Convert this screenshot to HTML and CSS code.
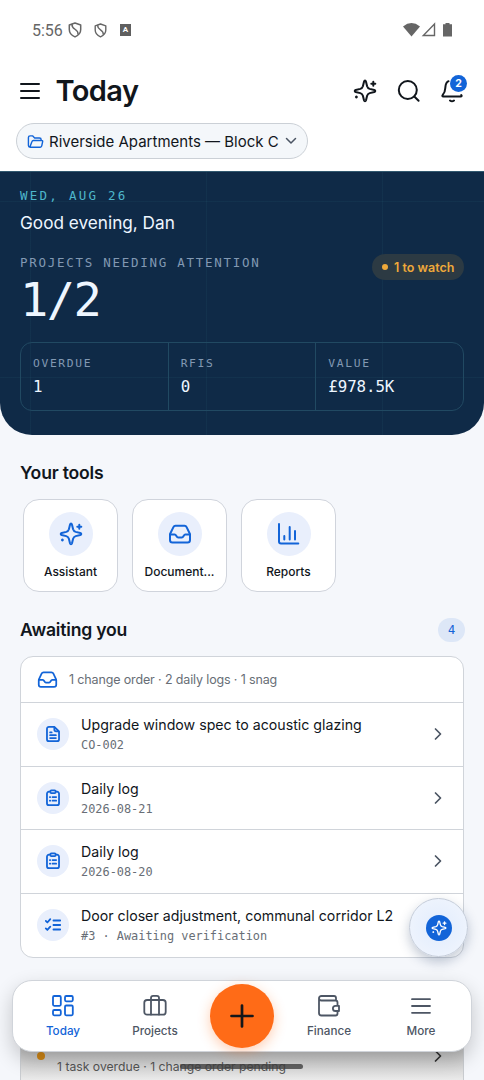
FILE: index.html
```html
<!DOCTYPE html>
<html lang="en">
<head>
<meta charset="utf-8">
<title>Today</title>
<link rel="stylesheet" href="styles.css">
</head>
<body>
<svg class="defs" aria-hidden="true">
  <symbol id="sparkle" viewBox="0 0 24 24"><path d="M12 1.6C12.6 1.6 12.8 2 13 2.7L14.1 7.3Q14.7 9.3 16.7 9.9L21.3 11C22.6 11.4 22.6 12.6 21.3 13L16.7 14.1Q14.7 14.7 14.1 16.7L13 21.3C12.6 22.6 11.4 22.6 11 21.3L9.9 16.7Q9.3 14.7 7.3 14.1L2.7 13C1.4 12.6 1.4 11.4 2.7 11L7.3 9.9Q9.3 9.3 9.9 7.3L11 2.7C11.2 2 11.4 1.6 12 1.6Z"/><path d="M20.3 2.7v4M18.3 4.700h4M3.400 17.600v1M2.900 18.100h1"/></symbol>
  <symbol id="inbox" viewBox="0 0 24 24"><path d="M2 12.500h4.600c1.900 0 1.700 3 3.600 3h3.600c1.900 0 1.700-3 3.600-3H22"/><path d="M5.400 5.100 2.300 11.500Q2 12.200 2 13v5a2.500 2.500 0 0 0 2.500 2.500h15A2.500 2.500 0 0 0 22 18v-5q0-.8-.3-1.500L18.600 5.100A2.300 2.300 0 0 0 16.500 3.800h-9A2.300 2.300 0 0 0 5.400 5.100Z"/></symbol>
  <symbol id="chev" viewBox="0 0 12 16"><path d="m3.500 3 5 5-5 5"/></symbol>
  <symbol id="clip" viewBox="0 0 20 20"><path d="M7 3H5.500A2.200 2.200 0 0 0 3.300 5.200v10.600A2.200 2.200 0 0 0 5.500 18h9a2.200 2.200 0 0 0 2.200-2.200V5.200A2.200 2.200 0 0 0 14.500 3H13"/><rect x="7" y="1.600" width="6" height="3" rx="1.200"/><path d="M6.500 9h.4M9.500 9h4M6.500 13h.4M9.500 13h4"/></symbol>
  <symbol id="shield" viewBox="0 0 14 16"><path d="M7 1 1.300 3v4.500C1.300 11 4 13.600 7 14.900c3-1.300 5.700-3.900 5.700-7.400V3Z"/><path d="M4 2.500c-.5 5 6.500 4.500 6 9.500"/></symbol>
</svg>
<div class="screen">
  <div class="status">
    <span class="clock">5:56</span>
    <svg class="gray" width="14" height="16"><use href="#shield"/></svg>
    <svg class="gray second" width="13" height="15"><use href="#shield"/></svg>
    <span class="abox">A</span>
    <svg class="signals" width="50" height="16" viewBox="0 0 50 16"><path class="solid" d="M0 4.500Q8.500-2.300 17 4.500L8.500 14.500Z"/><path class="wire" d="M31.500 2v11.500H20.300Z"/><path class="solid" d="M42.500 1h4v1.300h2.500v12.200h-9V2.300h2.500Z"/></svg>
  </div>
  <header class="top">
    <svg class="ink menu" width="22" height="18" viewBox="0 0 22 18"><path d="M2 2h18M2 9h18M2 16h18"/></svg>
    <h1>Today</h1>
    <svg class="ink" width="24" height="24"><use href="#sparkle"/></svg>
    <svg class="ink" width="24" height="24" viewBox="0 0 24 24"><circle cx="10.800" cy="11" r="9"/><path d="m17.300 17.500 4.300 4.300"/></svg>
    <div class="bell">
      <svg class="ink" width="24" height="24" viewBox="0 0 24 24"><path d="M8.500 2.200C5.300 3.800 5.500 7.200 5.300 9c-.2 4.200-1.500 5.700-2.600 7-.7.900-.3 1.600.6 1.600h17.400c.9 0 1.300-.7.600-1.600M10 21.500q2 1.600 4 0"/></svg>
      <span>2</span>
    </div>
  </header>
  <div class="picker">
    <div class="pill">
      <svg class="blue" width="17" height="17" viewBox="0 0 24 24"><path d="m4 20 3-8q.5-1.500 2-1.500h11.500q2 0 1.600 1.800l-1.300 5.900q-.4 1.800-2 1.800H4.500Q2 20 2 17.500v-11Q2 4 4.500 4h3.300l3 3h6.700Q20 7 20 9.500v1"/></svg>
      <span>Riverside Apartments — Block C</span>
      <svg class="slate" width="12" height="8" viewBox="0 0 12 8"><path d="m1.500 1.500 4.500 4.500 4.500-4.500"/></svg>
    </div>
  </div>
  <section class="hero">
    <div class="date mono">WED, AUG 26</div>
    <div class="greet">Good evening, Dan</div>
    <div class="attention">
      <div class="mono caption">PROJECTS NEEDING ATTENTION</div>
      <div class="watch"><i></i>1 to watch</div>
    </div>
    <div class="big mono">1/2</div>
    <div class="stats mono">
      <div><small>OVERDUE</small><b>1</b></div>
      <div><small>RFIS</small><b>0</b></div>
      <div><small>VALUE</small><b>£978.5K</b></div>
    </div>
  </section>
  <h2 class="tools-title">Your tools</h2>
  <div class="tools">
    <div class="tool"><span class="disc"><svg class="blue" width="24" height="24"><use href="#sparkle"/></svg></span><p>Assistant</p></div>
    <div class="tool"><span class="disc"><svg class="blue" width="24" height="24"><use href="#inbox"/></svg></span><p>Document...</p></div>
    <div class="tool"><span class="disc"><svg class="blue" width="24" height="24" viewBox="0 0 24 24"><path d="M2 2v17.500Q2 21.500 4 21.500H21.300M7.300 14v3.500M12.700 5v12.500M18 9v8.500"/></svg></span><p>Reports</p></div>
  </div>
  <div class="awaiting"><h2>Awaiting you</h2><span class="count mono">4</span></div>
  <div class="list">
    <div class="summary"><svg class="blue" width="21" height="21"><use href="#inbox"/></svg><span>1 change order · 2 daily logs · 1 snag</span></div>
    <div class="row"><span class="disc"><svg class="blue" width="18" height="18" viewBox="0 0 20 20"><path d="M11.500 2h-6A2.200 2.200 0 0 0 3.300 4.200v11.600A2.200 2.200 0 0 0 5.500 18h9a2.200 2.200 0 0 0 2.200-2.200V7ZM11.500 2v3Q11.500 7 13.500 7h3M6.800 8.300h1.700M6.800 11.300h6.400M6.800 14.500h6.400"/></svg></span><div><p>Upgrade window spec to acoustic glazing</p><p class="sub mono">CO-002</p></div><svg class="slate" width="12" height="16"><use href="#chev"/></svg></div>
    <div class="row"><span class="disc"><svg class="blue" width="18" height="18"><use href="#clip"/></svg></span><div><p>Daily log</p><p class="sub mono">2026-08-21</p></div><svg class="slate" width="12" height="16"><use href="#chev"/></svg></div>
    <div class="row"><span class="disc"><svg class="blue" width="18" height="18"><use href="#clip"/></svg></span><div><p>Daily log</p><p class="sub mono">2026-08-20</p></div><svg class="slate" width="12" height="16"><use href="#chev"/></svg></div>
    <div class="row"><span class="disc"><svg class="blue" width="18" height="18" viewBox="0 0 20 20"><path d="m2 5.500 1.700 1.700L7 3.500M2 13.800l1.700 1.700L7 11.800M10.500 5H18M10.500 10H18M10.500 15H18"/></svg></span><div><p>Door closer adjustment, communal corridor L2</p><p class="sub mono">#3 · Awaiting verification</p></div></div>
  </div>
  <div class="behind">
    <i></i><span class="desc">1 task overdue · 1 change order pending</span><svg class="dark" width="12" height="16"><use href="#chev"/></svg>
  </div>
  <div class="handle"></div>
  <div class="fab"><span><svg width="16" height="16"><use href="#sparkle"/></svg></span></div>
  <nav>
    <div class="tab on"><svg width="24" height="24" viewBox="0 0 24 24"><rect x="2" y="2" width="7.800" height="9.800" rx="1.200"/><rect x="14" y="2" width="7.800" height="5.300" rx="1.200"/><rect x="2" y="16" width="7.800" height="5.300" rx="1.200"/><rect x="14" y="11.500" width="7.800" height="9.800" rx="1.200"/></svg>Today</div>
    <div class="tab"><svg width="24" height="24" viewBox="0 0 24 24"><rect x="1.300" y="6" width="21.400" height="14.700" rx="2.800"/><path d="M8 20.500V4Q8 1.800 10.200 1.800h3.600Q16 1.800 16 4v16.500"/></svg>Projects</div>
    <div class="plus"><svg width="26" height="26" viewBox="0 0 26 26"><path d="M13 2.500v21M2.500 13h21"/></svg></div>
    <div class="tab"><svg width="24" height="24" viewBox="0 0 24 24"><path d="M19 6.500V4Q19 2 17 2H4.500Q2 2 2 4.300V19q0 2.500 2.500 2.500h14q2 0 2-2v-2.300M2 4.300Q2 6.500 4.500 6.500h14q2 0 2 2v3.300M18.500 11.800H22v5.200h-3.500a2.600 2.600 0 0 1 0-5.200Z"/></svg>Finance</div>
    <div class="tab"><svg width="24" height="24" viewBox="0 0 24 24"><path d="M3 5.200h18M3 12h18M3 18.800h18"/></svg>More</div>
  </nav>
</div>
</body>
</html>
```
FILE: styles.css
```css
* { box-sizing: border-box; }
body { margin: 0; font-family: Inter, Roboto, sans-serif; color: #11161c; }
h1, h2, p { margin: 0; }
svg { fill: none; stroke: currentColor; stroke-width: 2; stroke-linecap: round; stroke-linejoin: round; flex: none; display: block; }
.defs { position: absolute; width: 0; height: 0; }
.screen { position: relative; width: 484px; height: 1080px; overflow: hidden; background: #f5f7fb; display: flex; flex-direction: column; }
.mono { font-family: "DejaVu Sans Mono", monospace; }
.ink { color: #11161c; }
.blue { color: #1264d8; }
.slate { color: #4b5563; stroke-width: 1.500; }
.dark { color: #333; stroke-width: 1.700; }

.status { height: 60px; padding: 0 31px 0 32px; display: flex; align-items: center; background: #fff; color: #666; flex: none; }
.clock { font: 16px Roboto, sans-serif; width: 36px; }
.gray { stroke-width: 1.500; }
.second { margin-left: 12px; }
.abox { margin-left: 13px; width: 11px; height: 12px; background: #5f5f5f; color: #fff; font: bold 8px/12px Roboto, sans-serif; text-align: center; }
.signals { margin-left: auto; stroke: none; }
.solid { fill: #666; }
.wire { stroke: #666; stroke-width: 1.400; stroke-linejoin: miter; }

.top { height: 63px; padding: 0 20px 2px 19px; display: flex; align-items: center; background: #fff; flex: none; gap: 19.500px; }
.menu { margin-right: -5px; }
h1 { font-size: 29px; font-weight: 600; line-height: 36px; letter-spacing: -.6px; margin-right: auto; }
.bell { position: relative; }
.bell span { position: absolute; left: 10px; top: -4px; width: 17px; height: 17px; border-radius: 50%; background: #1264d8; color: #fff; font-size: 10.500px; font-weight: 700; line-height: 17px; text-align: center; }

.picker { height: 48px; padding-left: 16px; background: #fff; flex: none; }
.pill { width: 292px; height: 36px; padding: 0 10px; border: 1px solid #cbd0d6; border-radius: 18px; background: #f4f7fa; display: flex; align-items: center; font-size: 15px; }
.pill span { margin-left: 5px; white-space: nowrap; }
.pill .slate { margin-left: auto; }

.hero { height: 264px; padding: 15px 20px 0; border-top: 1px solid #31586f; border-radius: 0 0 32px 32px; flex: none; color: #eef6ff; background-color: #0f2a47;
  background-image: linear-gradient(#3b8a9a14 1px, transparent 1px), linear-gradient(90deg, #3b8a9a14 1px, transparent 1px);
  background-size: 176px 176px; background-position: 0 29px, 30px 0; }
.date { font-size: 12.500px; line-height: 18px; letter-spacing: 2.250px; color: #4eb7cb; }
.greet { font-size: 17.200px; line-height: 24px; margin-top: 6px; }
.attention { display: flex; justify-content: space-between; margin-top: 18px; height: 27px; }
.caption { font-size: 12.500px; line-height: 20px; letter-spacing: 1.720px; color: #8299b3; }
.watch { width: 92px; height: 26px; margin-top: 1px; border-radius: 13px; background: #2c3a43; color: #efa93a; font-size: 12.500px; font-weight: 600; display: flex; align-items: center; padding-left: 10px; white-space: nowrap; }
.watch i { width: 6px; height: 6px; border-radius: 50%; background: #efa93a; margin-right: 6px; }
.big { font-size: 47px; line-height: 50px; letter-spacing: -1.600px; margin-top: -5px; }
.stats { display: flex; height: 69px; margin-top: 17px; border: 1px solid #214962; border-radius: 12px; }
.stats div { flex: 1; padding: 13px 0 0 12px; border-left: 1px solid #214962; }
.stats div:first-child { border-left: 0; }
.stats small { display: block; font-size: 11.300px; line-height: 16px; letter-spacing: 1.650px; color: #8299b3; }
.stats b { display: block; margin-top: 5px; font-size: 15.800px; line-height: 20px; font-weight: 400; letter-spacing: -.1px; }

h2 { font-size: 17.600px; line-height: 24px; font-weight: 600; letter-spacing: -.2px; }
.tools-title { margin: 26px 20px 14px; }
.tools { display: flex; gap: 14px; padding-left: 23px; flex: none; }
.tool { width: 95px; height: 93px; border: 1px solid #d0d4dc; border-radius: 16px; background: #fff; text-align: center; padding-top: 12px; }
.disc { display: flex; align-items: center; justify-content: center; border-radius: 50%; background: #e9effc; }
.tool .disc { width: 44px; height: 44px; margin: 0 auto 8px; }
.tool p { font-size: 12px; line-height: 16px; font-weight: 500; }
.awaiting { display: flex; align-items: center; justify-content: space-between; padding: 0 19px 0 20px; height: 26px; margin-top: 25px; flex: none; }
.count { width: 27px; height: 24px; border-radius: 12px; background: #dde7f7; color: #1264d8; font-size: 12px; line-height: 24px; text-align: center; }

.list { margin: 13px 20px 0; border: 1px solid #d0d4da; border-radius: 13px; background: #fff; flex: none; overflow: hidden; height: 302px; }
.summary { height: 45px; display: flex; align-items: center; padding-left: 16px; color: #686e76; font-size: 12.500px; letter-spacing: -.14px; }
.summary span { margin-left: 11px; }
.row { height: 63.600px; border-top: 1px solid #d0d4da; display: flex; align-items: center; padding: 0 19px 0 16px; font-size: 14.200px; }
.row .disc { width: 32px; height: 32px; margin-right: 12px; flex: none; }
.row p { line-height: 20px; white-space: nowrap; transform: translateY(1px); }
.row > .slate { margin-left: auto; stroke-width: 1.700; }
.row .sub { font-size: 11.900px; color: #686e76; }

.behind { margin: 23px 20px 0; height: 120px; border: 1px solid #c9ccd0; border-radius: 13px; background: linear-gradient(#c4c4c4 70px, #ededed 100px); display: flex; flex: none; }
.behind i { margin: 70px 0 0 16px; width: 8px; height: 8px; border-radius: 50%; background: #cf8616; }
.desc { margin: 77px 0 0 12px; font-size: 12.200px; line-height: 16px; color: #555; white-space: nowrap; }
.behind .dark { margin: 66px 19px 0 auto; }
.handle { position: absolute; left: 180px; top: 1064px; width: 123px; height: 5px; border-radius: 3px; background: #444c; }
.fab { position: absolute; left: 409px; top: 898px; width: 59px; height: 59px; border-radius: 50%; border: 1px solid #c4ccd9; background: radial-gradient(#e1ecfd, #edf3fd 70%); box-shadow: 0 5px 12px #19335f44; display: grid; place-items: center; }
.fab span { width: 26px; height: 26px; border-radius: 50%; background: #1264d8; color: #fff; display: grid; place-items: center; }
nav { position: absolute; left: 12px; top: 980px; width: 460px; height: 72px; border-radius: 20px; border: 1px solid #d0d4da; background: #fff; box-shadow: 0 8px 20px #0003; display: flex; align-items: center; padding: 0 4px; }
.tab { flex: 1; display: flex; flex-direction: column; align-items: center; gap: 5px; color: #4d5664; font-size: 11.700px; line-height: 16px; font-weight: 500; padding-top: 1px; }
.tab svg { stroke-width: 1.800; }
.on { color: #1264d8; }
.plus { width: 64px; height: 64px; margin: 0 9px; border-radius: 50%; background: #ff6b17; color: #15171a; box-shadow: 0 4px 13px #ff6b1755; display: grid; place-items: center; }
.plus svg { stroke-width: 2.700; }
```
